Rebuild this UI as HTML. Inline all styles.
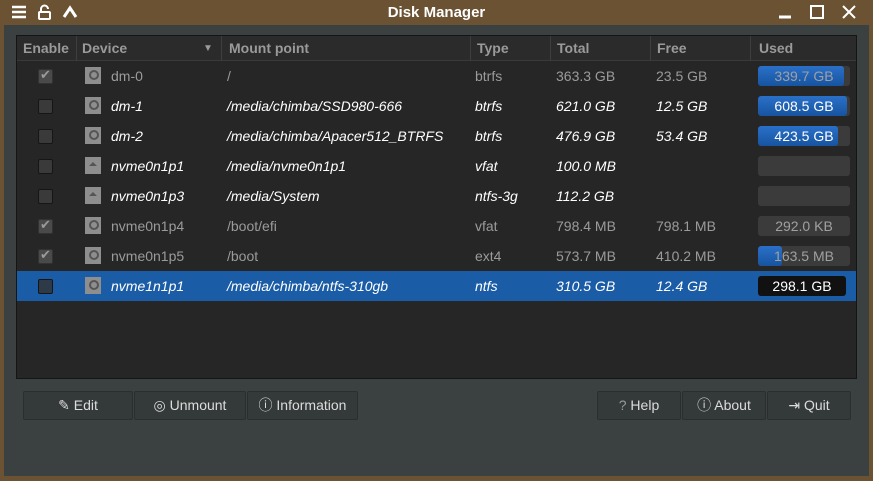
<!DOCTYPE html>
<html><head><meta charset="utf-8"><style>
*{box-sizing:border-box;margin:0;padding:0}
body{width:873px;height:481px;overflow:hidden;background:#6a5232;font-family:"Liberation Sans",sans-serif;font-size:14px;position:relative}
.win{position:absolute;left:4px;top:25px;width:865px;height:451px;background:#3b4140}
.tb{position:absolute;left:0;top:0;width:873px;height:25px;background:#6a5232}
.title{position:absolute;left:0;width:873px;top:4px;text-align:center;color:#fff;font-weight:bold;font-size:15px}
.tsvg{position:absolute;top:4px}
.frame{position:absolute;left:16px;top:35px;width:841px;height:344px;background:#262626;border:1px solid #151515}
.hdr{position:absolute;left:0;top:0;width:839px;height:25px;background:#2b2b2b;border-bottom:1px solid #3a3a3a;color:#9a9a9a;font-weight:bold}
.hdr span{position:absolute;top:4px}
.sep{position:absolute;top:0;width:1px;height:25px;background:#3e3e3e}
.row{position:absolute;left:0;width:839px;height:30px;color:#fff;font-style:italic}
.row.g{color:#9b9b9b;font-style:normal}
.row.sel{background:#1b5ca6}
.row span{position:absolute;top:7px}
.cb{position:absolute;left:21px;top:8px;width:15px;height:15px;border:1px solid #161616;background:#3a3a3a;border-radius:2px}
.g .cb{background:#4a4a4a;border-color:#333}
.g .cb:after{content:"✔";position:absolute;left:1px;top:-3px;font-size:13px;color:#9a9a9a;font-style:normal}
.ic{position:absolute;left:68px;top:6px;width:16px;height:17px;background:#8e8e8e}
.ic:after{content:"";position:absolute;left:4px;top:3px;width:6px;height:6px;border:2px solid #555;border-radius:50%}
.ic.e:after{border:none;width:0;height:0;border-left:4px solid transparent;border-right:4px solid transparent;border-bottom:4px solid #555;border-radius:0;left:4px;top:5px}
.bar{position:absolute;left:741px;top:5px;width:92px;height:20px;background:#3b3b3b;border-radius:3px;overflow:hidden}
.fill{position:absolute;left:0;top:0;height:20px;background:linear-gradient(#2a70c8,#1754a0);border-radius:3px}
.bar b{position:absolute;left:0;width:92px;top:2px;text-align:center;font-weight:normal;font-style:normal;color:#fff}
.g .bar b{color:#a0a0a0}
.btn{position:absolute;top:391px;height:29px;background:#343a39;border:1px solid #2a2f2e;border-radius:2px;color:#dcdcdc;font-size:14px;text-align:center;line-height:27px}
</style></head><body>
<div class="tb"></div>
<svg class="tsvg" style="left:11px" width="16" height="16"><path d="M1 3h14M1 8h14M1 13h14" stroke="#fff" stroke-width="2.5"/></svg>
<svg class="tsvg" style="left:37px" width="15" height="16"><path d="M4 8V5a3.5 3.5 0 0 1 7 0" stroke="#fff" stroke-width="2" fill="none"/><rect x="2" y="8" width="11" height="7" rx="1" fill="none" stroke="#fff" stroke-width="2"/></svg>
<svg class="tsvg" style="left:62px" width="16" height="16"><path d="M2 13L8 4l6 9" stroke="#fff" stroke-width="3" fill="none"/></svg>
<div class="title">Disk Manager</div>
<svg class="tsvg" style="left:777px" width="16" height="16"><path d="M2 13h12" stroke="#fff" stroke-width="3"/></svg>
<svg class="tsvg" style="left:809px" width="16" height="16"><rect x="2" y="2" width="12" height="12" fill="none" stroke="#fff" stroke-width="2"/></svg>
<svg class="tsvg" style="left:841px" width="16" height="16"><path d="M2 2l12 12M14 2L2 14" stroke="#fff" stroke-width="2"/></svg>
<div class="win"></div>
<div class="frame">
<div class="hdr">
<span style="left:6px">Enable</span><div class="sep" style="left:59px"></div>
<span style="left:65px">Device</span><span style="left:186px;font-size:10px;top:7px">▼</span><div class="sep" style="left:204px"></div>
<span style="left:212px">Mount point</span><div class="sep" style="left:453px"></div>
<span style="left:460px">Type</span><div class="sep" style="left:533px"></div>
<span style="left:540px">Total</span><div class="sep" style="left:633px"></div>
<span style="left:640px">Free</span><div class="sep" style="left:733px"></div>
<span style="left:742px">Used</span>
</div>
<div class="row g" style="top:25px"><div class="cb"></div><div class="ic"></div><span style="left:94px">dm-0</span><span style="left:210px">/</span><span style="left:458px">btrfs</span><span style="left:539px">363.3 GB</span><span style="left:639px">23.5 GB</span><div class="bar"><div class="fill" style="width:86px"></div><b>339.7 GB</b></div></div>
<div class="row" style="top:55px"><div class="cb"></div><div class="ic"></div><span style="left:94px">dm-1</span><span style="left:210px">/media/chimba/SSD980-666</span><span style="left:458px">btrfs</span><span style="left:539px">621.0 GB</span><span style="left:639px">12.5 GB</span><div class="bar"><div class="fill" style="width:89px"></div><b>608.5 GB</b></div></div>
<div class="row" style="top:85px"><div class="cb"></div><div class="ic"></div><span style="left:94px">dm-2</span><span style="left:210px">/media/chimba/Apacer512_BTRFS</span><span style="left:458px">btrfs</span><span style="left:539px">476.9 GB</span><span style="left:639px">53.4 GB</span><div class="bar"><div class="fill" style="width:80px"></div><b>423.5 GB</b></div></div>
<div class="row" style="top:115px"><div class="cb"></div><div class="ic e"></div><span style="left:94px">nvme0n1p1</span><span style="left:210px">/media/nvme0n1p1</span><span style="left:458px">vfat</span><span style="left:539px">100.0 MB</span><div class="bar"></div></div>
<div class="row" style="top:145px"><div class="cb"></div><div class="ic e"></div><span style="left:94px">nvme0n1p3</span><span style="left:210px">/media/System</span><span style="left:458px">ntfs-3g</span><span style="left:539px">112.2 GB</span><div class="bar"></div></div>
<div class="row g" style="top:175px"><div class="cb"></div><div class="ic"></div><span style="left:94px">nvme0n1p4</span><span style="left:210px">/boot/efi</span><span style="left:458px">vfat</span><span style="left:539px">798.4 MB</span><span style="left:639px">798.1 MB</span><div class="bar"><b>292.0 KB</b></div></div>
<div class="row g" style="top:205px"><div class="cb"></div><div class="ic"></div><span style="left:94px">nvme0n1p5</span><span style="left:210px">/boot</span><span style="left:458px">ext4</span><span style="left:539px">573.7 MB</span><span style="left:639px">410.2 MB</span><div class="bar"><div class="fill" style="width:24px"></div><b>163.5 MB</b></div></div>
<div class="row sel" style="top:235px"><div class="cb" style="background:#2e3a48"></div><div class="ic"></div><span style="left:94px">nvme1n1p1</span><span style="left:210px">/media/chimba/ntfs-310gb</span><span style="left:458px">ntfs</span><span style="left:539px">310.5 GB</span><span style="left:639px">12.4 GB</span><div class="bar" style="width:88px;background:#111"><b style="width:88px">298.1 GB</b></div></div>
</div>
<div class="btn" style="left:23px;width:110px">✎ Edit</div>
<div class="btn" style="left:134px;width:112px">◎ Unmount</div>
<div class="btn" style="left:247px;width:111px">ⓘ Information</div>
<div class="btn" style="left:597px;width:84px"><span style="color:#999">?</span> Help</div>
<div class="btn" style="left:682px;width:84px">ⓘ About</div>
<div class="btn" style="left:767px;width:84px">⇥ Quit</div>
</body></html>
